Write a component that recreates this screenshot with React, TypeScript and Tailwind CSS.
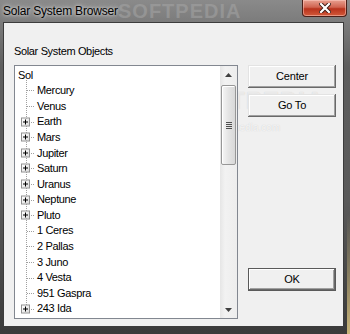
import React from "react";

const children: { name: string; plus?: boolean }[] = [
  { name: "Mercury" },
  { name: "Venus" },
  { name: "Earth", plus: true },
  { name: "Mars", plus: true },
  { name: "Jupiter", plus: true },
  { name: "Saturn", plus: true },
  { name: "Uranus", plus: true },
  { name: "Neptune", plus: true },
  { name: "Pluto", plus: true },
  { name: "1 Ceres" },
  { name: "2 Pallas" },
  { name: "3 Juno" },
  { name: "4 Vesta" },
  { name: "951 Gaspra" },
  { name: "243 Ida", plus: true },
];

function PlusBox() {
  return (
    <span className="absolute left-[6px] top-1/2 -translate-y-1/2 w-[9px] h-[9px] border border-[#919191] bg-[linear-gradient(135deg,#ffffff,#dcdcdc)] flex items-center justify-center">
      <span className="absolute w-[5px] h-px bg-black" />
      <span className="absolute w-px h-[5px] bg-black" />
    </span>
  );
}

function Btn({ label, def }: { label: string; def?: boolean }) {
  return (
    <button
      className={
        "w-[88px] h-[23px] bg-[#f0f0f0] text-black text-[11px] tracking-[-0.2px] flex items-center justify-center " +
        (def
          ? "border border-[#5a5a5a] shadow-[inset_-1px_-1px_#6a6a6a,inset_1px_1px_#ffffff,inset_-2px_-2px_#a0a0a0]"
          : "shadow-[inset_-1px_-1px_#696969,inset_1px_1px_#e3e3e3,inset_-2px_-2px_#a0a0a0,inset_2px_2px_#ffffff]")
      }
    >
      {label}
    </button>
  );
}

export default function App() {
  return (
    <div className="relative w-[350px] h-[334px] overflow-hidden bg-[linear-gradient(180deg,#8a8a8a_0%,#5e5e5e_20%,#5a5a5a_60%,#3a3a3a_100%)] font-['Liberation_Sans',Arial,sans-serif] select-none">
      {/* title bar */}
      <div className="relative h-[22px] flex items-center pl-[3px]">
        <span className="text-[12px] tracking-[-0.2px] text-black [text-shadow:0_0_6px_#d8d8d8,0_0_3px_#e0e0e0]">
          Solar System Browser
        </span>
        <span className="absolute left-[118px] top-[1px] text-[20px] font-bold tracking-[1px] text-[#a8a8a8]/50 leading-none">
          SOFTPEDIA
        </span>
        <div className="absolute right-[3px] top-0 w-[45px] h-[17px] rounded-b-[4px] border border-t-0 border-[#4a1f18] bg-[linear-gradient(180deg,#e8a090_0%,#d06450_45%,#b8321c_55%,#d25a3a_100%)] shadow-[inset_0_0_0_1px_rgba(255,210,200,0.5)] flex items-center justify-center">
          <svg width="12" height="10" viewBox="0 0 12 10">
            <path d="M2 1 L10 9 M10 1 L2 9" stroke="#3a1a14" strokeWidth="4" strokeLinecap="square" />
            <path d="M2 1 L10 9 M10 1 L2 9" stroke="#ffffff" strokeWidth="2.2" strokeLinecap="square" />
          </svg>
        </div>
      </div>

      {/* right edge tint */}
      <div className="absolute right-0 bottom-0 w-[3px] h-[120px] bg-[linear-gradient(180deg,transparent,#c9b57a)]" />

      {/* client area */}
      <div className="relative ml-[3px] w-[341px] h-[305px] border border-[#3c3c3c] bg-[#f0f0f0] text-[11px] tracking-[-0.35px] text-black">
        {/* watermark */}
        <span className="pointer-events-none absolute left-[174px] top-[66px] text-[24px] font-bold tracking-[1px] text-white/60 [text-shadow:0_0_1px_#c8c8c8] leading-none">
          SOFTPEDIA
        </span>
        <span className="pointer-events-none absolute left-[190px] top-[97px] text-[10px] text-white/80 [text-shadow:0_0_1px_#c0c0c0] tracking-normal">
          www.softpedia.com
        </span>
        <div className="relative flex pl-[10px] pt-[21px]">
          <div className="flex flex-col">
            <div className="h-[14px] leading-[14px]">Solar System Objects</div>
            <div className="mt-[7px] w-[224px] h-[254px] border border-[#828790] bg-white flex">
              <div className="flex-1 pt-[1px]">
                <div className="h-[15.6px] flex items-center pl-[3px]">Sol</div>
                <div className="relative">
                  <span className="absolute left-[11px] top-[-3px] bottom-[7.8px] border-l border-dotted border-[#a0a0a0]" />
                  {children.map((c) => (
                    <div key={c.name} className="relative h-[15.6px] flex items-center pl-[22px]">
                      <span className="absolute left-[12px] top-1/2 w-[7px] border-t border-dotted border-[#a0a0a0]" />
                      {c.plus && <PlusBox />}
                      <span className="relative">{c.name}</span>
                    </div>
                  ))}
                </div>
              </div>
              {/* scrollbar */}
              <div className="w-[17px] h-full bg-[linear-gradient(90deg,#e6e6e6,#f2f2f2_30%,#ededed)] flex flex-col items-center">
                <div className="h-[17px] w-full flex items-center justify-center">
                  <svg width="7" height="4" viewBox="0 0 7 4">
                    <path d="M0 4 L3.5 0 L7 4 Z" fill="#404040" />
                  </svg>
                </div>
                <div className="mt-[2px] w-[15px] h-[80px] rounded-[2px] border border-[#979797] bg-[linear-gradient(90deg,#f6f6f6,#e4e4e4_50%,#d8d8d8)] shadow-[inset_1px_1px_#ffffff] flex flex-col items-center justify-center gap-[1px]">
                  <span className="w-[6px] h-px bg-[#505050]" />
                  <span className="w-[6px] h-px bg-[#505050]" />
                  <span className="w-[6px] h-px bg-[#505050]" />
                  <span className="w-[6px] h-px bg-[#505050]" />
                </div>
                <div className="flex-1" />
                <div className="h-[17px] w-full flex items-center justify-center">
                  <svg width="7" height="4" viewBox="0 0 7 4">
                    <path d="M0 0 L3.5 4 L7 0 Z" fill="#404040" />
                  </svg>
                </div>
              </div>
            </div>
          </div>
          <div className="ml-[10px] pt-[21px] flex flex-col">
            <Btn label="Center" />
            <div className="mt-[6px]">
              <Btn label="Go To" />
            </div>
            <div className="mt-[151px]">
              <Btn label="OK" def />
            </div>
          </div>
        </div>
      </div>
    </div>
  );
}
